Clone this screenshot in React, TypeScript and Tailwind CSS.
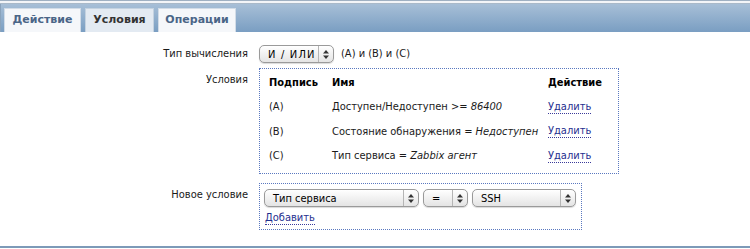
import React from 'react';

const font = { fontFamily: '"DejaVu Sans Condensed", "DejaVu Sans", Verdana, sans-serif' };

function Arrows() {
  return (
    <svg width="6" height="9" viewBox="0 0 6 9" className="block">
      <path d="M3 0 L6 3.5 L0 3.5 Z" fill="#333" />
      <path d="M3 9 L6 5.5 L0 5.5 Z" fill="#333" />
    </svg>
  );
}

function Select({ label, width, wide }: { label: string; width: string; wide?: boolean }) {
  return (
    <div
      className={`${width} shrink-0 h-[18px] flex items-stretch rounded-[5px] border border-[#9a9a9a] bg-gradient-to-b from-white to-[#e4e4e4] shadow-[0_1px_1px_rgba(0,0,0,0.15)] whitespace-nowrap overflow-hidden`}
    >
      <span
        className={`flex-1 flex items-center pl-[8px] text-[11px] text-black leading-none ${
          wide ? 'tracking-[1.2px]' : ''
        }`}
      >
        {label}
      </span>
      <span className="w-[15px] flex items-center justify-center border-l border-[#b5b5b5]">
        <Arrows />
      </span>
    </div>
  );
}

function Tab({ label, active, width }: { label: string; active?: boolean; width: string }) {
  return (
    <div
      className={`${width} h-[24px] flex items-center justify-center text-[11px] font-bold border border-b-0 ${
        active
          ? 'bg-[#e3eaf2] text-[#333] border-[#c4d2e0]'
          : 'bg-[#f5f7fa] text-[#4a6587] border-[#d2dce7]'
      }`}
      style={{ fontFamily: '"DejaVu Sans", Verdana, sans-serif' }}
    >
      {label}
    </div>
  );
}

const rows = [
  { tag: '(A)', name: 'Доступен/Недоступен >= ', val: '86400' },
  { tag: '(B)', name: 'Состояние обнаружения = ', val: 'Недоступен' },
  { tag: '(C)', name: 'Тип сервиса = ', val: 'Zabbix агент' },
];

function Link({ children }: { children: React.ReactNode }) {
  return (
    <span className="text-[#1f2f8f] border-b border-dotted border-[#3a3a9a] leading-[12px]">{children}</span>
  );
}

export default function App() {
  return (
    <div className="w-[750px] h-[249px] bg-white text-[11px] text-[#1a1a1a] overflow-hidden flex flex-col" style={font}>
      <div className="h-[1px] bg-[#9fb0c2]" />
      <div className="h-[2px] bg-[#f3f5f8]" />
      <div className="h-[1px] bg-[#a9b9c9]" />
      <div className="h-[28px] bg-gradient-to-b from-[#a7bfd7] to-[#7a9ec2] flex items-end pl-[3px] gap-[4px] border-l border-[#8aa3bc]">
        <Tab label="Действие" width="w-[77px]" />
        <Tab label="Условия" width="w-[69px]" active />
        <Tab label="Операции" width="w-[78px]" />
      </div>

      <div className="flex-1 flex flex-col pt-[13px]">
        <div className="flex items-center h-[18px]">
          <div className="w-[259px] text-right pr-[11px]">Тип вычисления</div>
          <Select label="И / ИЛИ" width="w-[75px]" wide />
          <span className="ml-[7px] whitespace-nowrap">(A) и (B) и (C)</span>
        </div>

        <div className="flex mt-[5px]">
          <div className="w-[259px] text-right pr-[11px] pt-[4px]">Условия</div>
          <div className="w-[360px] h-[106px] border border-dotted border-[#5a78c0] px-[9px] pt-[6px]">
            <div className="grid grid-cols-[63px_216px_1fr]">
              <div className="font-bold text-black h-[20px]">Подпись</div>
              <div className="font-bold text-black">Имя</div>
              <div className="font-bold text-black">Действие</div>
              {rows.map((r) => (
                <React.Fragment key={r.tag}>
                  <div className="h-[24.5px] flex items-center">{r.tag}</div>
                  <div className="flex items-center whitespace-pre">
                    {r.name}
                    <i>{r.val}</i>
                  </div>
                  <div className="flex items-center">
                    <Link>Удалить</Link>
                  </div>
                </React.Fragment>
              ))}
            </div>
          </div>
        </div>

        <div className="flex mt-[9px]">
          <div className="w-[259px] text-right pr-[11px] pt-[4px]">Новое условие</div>
          <div className="w-[323px] h-[47px] border border-dotted border-[#5a78c0] pl-[4px] pt-[5px]">
            <div className="flex gap-[4px]">
              <Select label="Тип сервиса" width="w-[155px]" />
              <Select label="=" width="w-[45px]" />
              <Select label="SSH" width="w-[104px]" />
            </div>
            <div className="mt-[3px] pl-[1px]">
              <Link>Добавить</Link>
            </div>
          </div>
        </div>
      </div>
      <div className="h-[2px] bg-[#7d9ab8] mb-[1px]" />
    </div>
  );
}
